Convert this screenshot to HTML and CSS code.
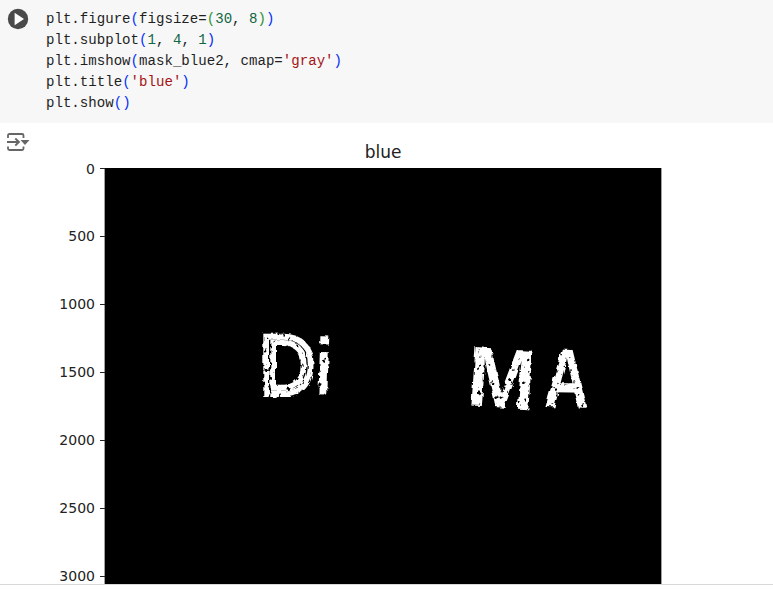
FILE: index.html
```html
<!DOCTYPE html>
<html lang="en">
<head>
    <meta charset="UTF-8">
    <title>Notebook cell</title>
    <link rel="stylesheet" href="styles.css">
</head>
<body>
    <div class="notebook">
        <div class="code-cell">
            <button class="run-btn" aria-label="Run cell">
                <svg width="22" height="22" viewBox="0 0 22 22">
                    <circle cx="11" cy="11" r="10.2" fill="#4a4a4a"/>
                    <path d="M7.6 4.8 L17 11 L7.6 17.2 Z" fill="#ffffff"/>
                </svg>
            </button>
            <pre class="code"><span>plt.figure<b class="br1">(</b>figsize=<b class="br2">(</b><i class="num">30</i>, <i class="num">8</i><b class="br2">)</b><b class="br1">)</b></span>
<span>plt.subplot<b class="br1">(</b><i class="num">1</i>, <i class="num">4</i>, <i class="num">1</i><b class="br1">)</b></span>
<span>plt.imshow<b class="br1">(</b>mask_blue2, cmap=<i class="str">'gray'</i><b class="br1">)</b></span>
<span>plt.title<b class="br1">(</b><i class="str">'blue'</i><b class="br1">)</b></span>
<span>plt.show<b class="br1">()</b></span></pre>
        </div>
        <div class="output">
            <div class="output-icon">
                <svg width="23" height="19" viewBox="0 0 23 19" fill="none" stroke="#666666" stroke-width="1.8">
                    <path d="M1 5 V2.5 Q1 1 2.5 1 H15 Q16.500 1 16.500 2.500 V5"/>
                    <path d="M1 13.500 V15.500 Q1 17 2.500 17 H15 Q16.500 17 16.500 15.500 V13.500"/>
                    <path d="M0 9 H12 M8.300 5.500 L12 9 L8.300 12.500"/>
                    <path d="M13.500 7 H22.500 L18 12 Z" fill="#666666" stroke="none"/>
                </svg>
            </div>
            <svg class="figure" width="733" height="461" viewBox="40 123 733 461">
                <defs>
                    <filter id="rough" x="-10%" y="-10%" width="120%" height="120%">
                        <feTurbulence type="fractalNoise" baseFrequency="0.13" numOctaves="2" seed="4" result="wave"/>
                        <feDisplacementMap in="SourceGraphic" in2="wave" scale="5" result="shape"/>
                        <feTurbulence type="fractalNoise" baseFrequency="0.22" numOctaves="2" seed="9"/>
                        <feColorMatrix type="matrix" values="0 0 0 0 1  0 0 0 0 1  0 0 0 0 1  9 0 0 0 -2.1" result="holes"/>
                        <feComposite in="shape" in2="holes" operator="in"/>
                        <feGaussianBlur stdDeviation="0.5"/>
                    </filter>
                </defs>
                <text class="plot-title" x="383" y="158" text-anchor="middle">blue</text>
                <rect x="105" y="168" width="556" height="420" fill="#000000"/>
                <path class="spine" d="M104.500 168 V584 M661.500 168 V584"/>
                <g class="handwriting" filter="url(#rough)">
                    <text class="letter-d" transform="translate(260 394) scale(.94 1.04)">D</text>
                    <text class="letter-i" transform="translate(314 394) rotate(2) scale(.8 1)">i</text>
                    <text class="letter-ma" transform="translate(466 405) rotate(4) scale(.96 1)">M</text>
                    <text class="letter-ma" transform="translate(544 407) rotate(1) scale(.72 1)">A</text>
                </g>
                <g class="ticks">
                    <path d="M100 168.500 H105 M100 236.500 H105 M100 304.500 H105 M100 372.500 H105 M100 440.500 H105 M100 508.500 H105 M100 576.500 H105" stroke="#222222" fill="none"/>
                    <text x="95" y="174">0</text>
                    <text x="95" y="241">500</text>
                    <text x="95" y="309">1000</text>
                    <text x="95" y="377">1500</text>
                    <text x="95" y="445">2000</text>
                    <text x="95" y="513">2500</text>
                    <text x="95" y="581">3000</text>
                </g>
            </svg>
        </div>
    </div>
    <div class="page-end"></div>
</body>
</html>
```

FILE: styles.css
```css
html, body {
    height: 100%;
}

body {
    margin: 0;
    background-color: #ffffff;
    overflow: hidden;
}

.notebook {
    height: 584px;
    overflow: hidden;
    border-bottom: 1px solid #d9d9d9;
}

.code-cell {
    display: flex;
    height: 123px;
    background-color: #f7f7f7;
}

.run-btn {
    width: 46px;
    height: 30px;
    flex: none;
    margin: 0;
    padding: 7px 0 0 7px;
    border: none;
    background: none;
    text-align: left;
    line-height: 0;
}

.code {
    margin: 0;
    padding-top: 9px;
    font-family: "Liberation Mono", monospace;
    font-size: 14.1px;
    line-height: 21px;
    color: #1f1f1f;
}

.code b,
.code i {
    font-weight: normal;
    font-style: normal;
}

.br1 {
    color: #0431fa;
}

.br2 {
    color: #319331;
}

.num {
    color: #116644;
}

.str {
    color: #a31515;
}

.output {
    display: flex;
    align-items: flex-start;
}

.output-icon {
    width: 33px;
    flex: none;
    padding: 10px 0 0 7px;
    line-height: 0;
}

.figure {
    display: block;
    flex: none;
}

.spine {
    fill: none;
    stroke: #a0a0a0;
}

.plot-title {
    font-family: "DejaVu Sans", sans-serif;
    font-size: 17px;
    fill: #222222;
}

.ticks text {
    font-family: "DejaVu Sans", sans-serif;
    font-size: 14px;
    fill: #222222;
    text-anchor: end;
}

.handwriting text {
    font-family: "Liberation Sans", sans-serif;
    fill: #ffffff;
}

.handwriting .letter-d {
    font-size: 80px;
    fill: none;
    stroke: #ffffff;
    stroke-width: 6px;
}

.letter-i {
    font-size: 80px;
    font-weight: bold;
}

.letter-ma {
    font-size: 85px;
    font-weight: bold;
}
```
